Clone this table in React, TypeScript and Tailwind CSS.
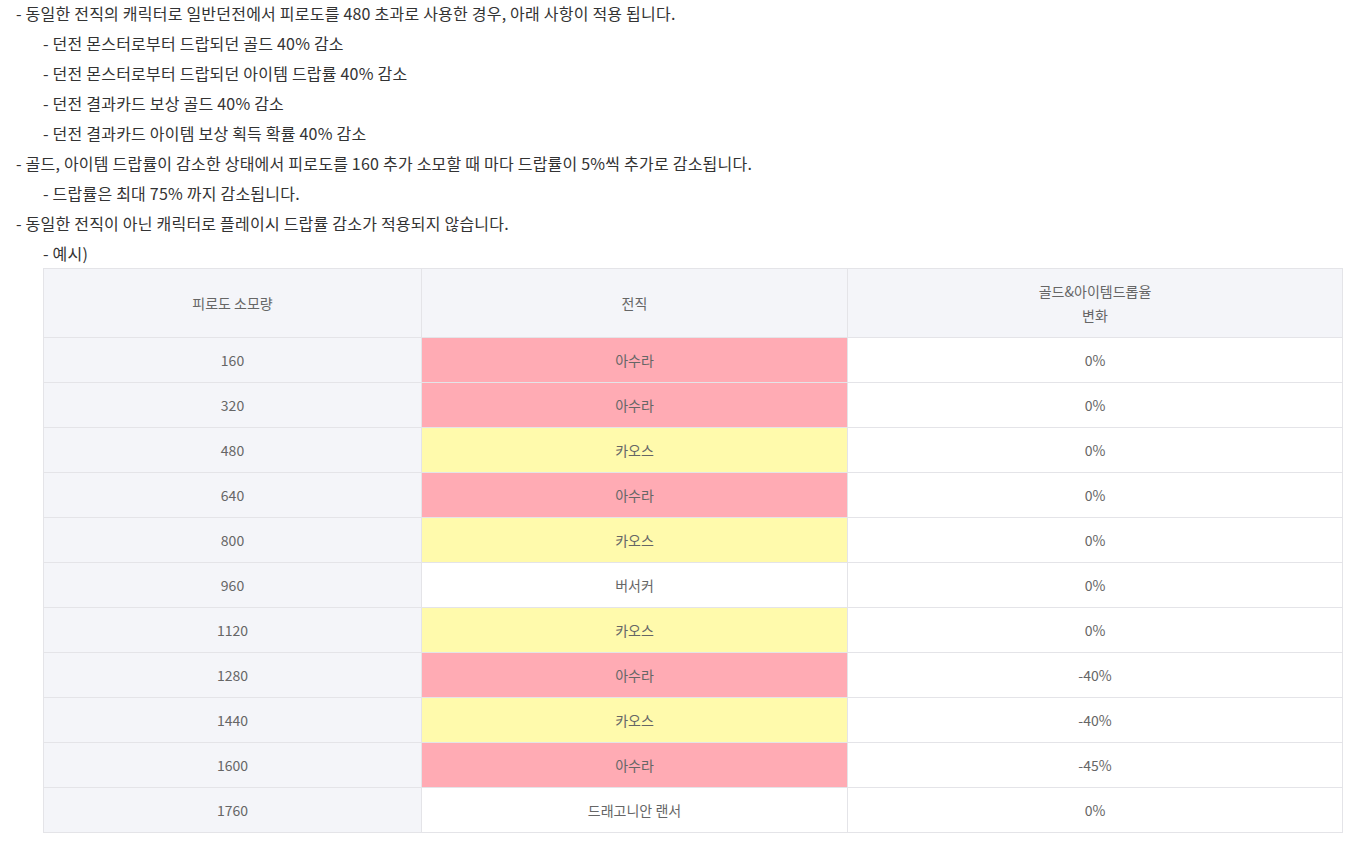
import React from 'react';

type Row = { fatigue: number; job: string; change: string };

const rows: Row[] = [
  { fatigue: 160, job: '아수라', change: '0%' },
  { fatigue: 320, job: '아수라', change: '0%' },
  { fatigue: 480, job: '카오스', change: '0%' },
  { fatigue: 640, job: '아수라', change: '0%' },
  { fatigue: 800, job: '카오스', change: '0%' },
  { fatigue: 960, job: '버서커', change: '0%' },
  { fatigue: 1120, job: '카오스', change: '0%' },
  { fatigue: 1280, job: '아수라', change: '-40%' },
  { fatigue: 1440, job: '카오스', change: '-40%' },
  { fatigue: 1600, job: '아수라', change: '-45%' },
  { fatigue: 1760, job: '드래고니안 랜서', change: '0%' },
];

const jobBg = (job: string) => {
  if (job === '아수라') return 'bg-[#ffabb4]';
  if (job === '카오스') return 'bg-[#fffaac]';
  return 'bg-white';
};

const Line = ({ sub, children }: { sub?: boolean; children: React.ReactNode }) => (
  <p className={sub ? 'pl-[43px]' : 'pl-[16px]'}>- {children}</p>
);

export default function App() {
  return (
    <div className="min-h-screen bg-white text-[#333] text-[16px] leading-[30px] font-['Noto_Sans_CJK_KR','Noto_Sans',sans-serif]">
      <div className="-mt-[2px] tracking-[0.22px]">
        <Line>동일한 전직의 캐릭터로 일반던전에서 피로도를 480 초과로 사용한 경우, 아래 사항이 적용 됩니다.</Line>
        <Line sub>던전 몬스터로부터 드랍되던 골드 40% 감소</Line>
        <Line sub>던전 몬스터로부터 드랍되던 아이템 드랍률 40% 감소</Line>
        <Line sub>던전 결과카드 보상 골드 40% 감소</Line>
        <Line sub>던전 결과카드 아이템 보상 획득 확률 40% 감소</Line>
        <Line>골드, 아이템 드랍률이 감소한 상태에서 피로도를 160 추가 소모할 때 마다 드랍률이 5%씩 추가로 감소됩니다.</Line>
        <Line sub>드랍률은 최대 75% 까지 감소됩니다.</Line>
        <Line>동일한 전직이 아닌 캐릭터로 플레이시 드랍률 감소가 적용되지 않습니다.</Line>
        <Line sub>예시)</Line>
      </div>

      <table className="ml-[43px] w-[1300px] border-collapse text-[14px] leading-[24px] text-[#666] text-center">
        <thead>
          <tr className="bg-[#f4f5f9]">
            <th className="w-[378px] h-[69px] border border-[#e4e4e8] font-normal">피로도 소모량</th>
            <th className="w-[426px] border border-[#e4e4e8] font-normal">전직</th>
            <th className="border border-[#e4e4e8] font-normal">
              골드&amp;아이템드롭율
              <br />
              변화
            </th>
          </tr>
        </thead>
        <tbody>
          {rows.map((r) => (
            <tr key={r.fatigue}>
              <td className="h-[45px] border border-[#e4e4e8] bg-[#f4f5f9]">{r.fatigue}</td>
              <td className={`border border-[#e4e4e8] ${jobBg(r.job)}`}>{r.job}</td>
              <td className="border border-[#e4e4e8] bg-white">{r.change}</td>
            </tr>
          ))}
        </tbody>
      </table>
    </div>
  );
}
